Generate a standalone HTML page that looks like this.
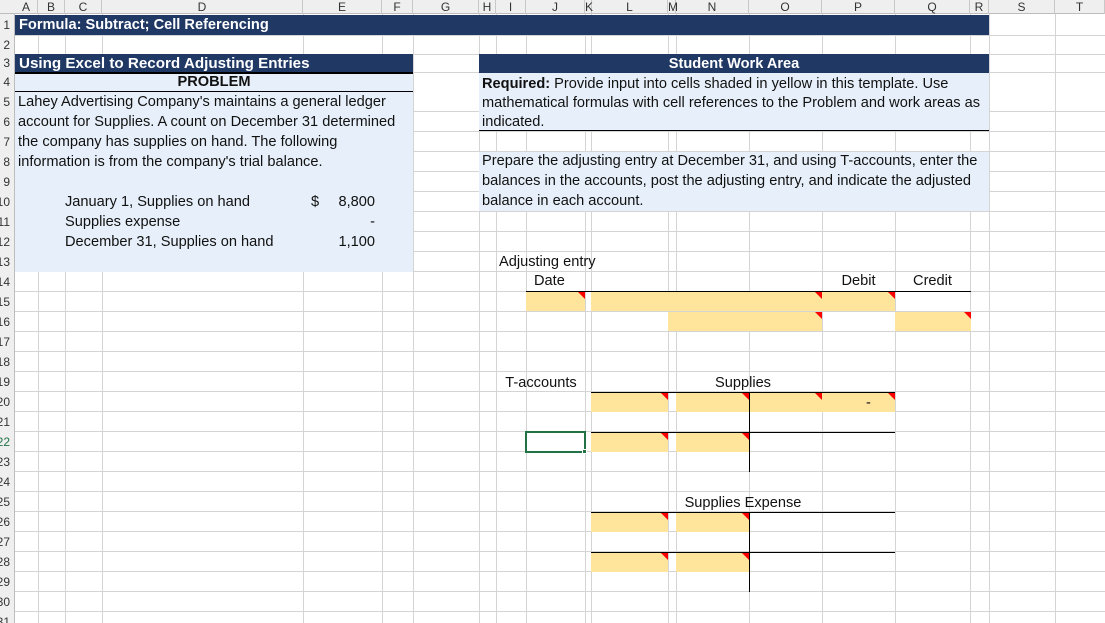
<!DOCTYPE html>
<html><head><meta charset="utf-8"><style>
*{margin:0;padding:0;box-sizing:border-box}
body{width:1105px;height:623px;overflow:hidden;background:#fff;position:relative;font-family:"Liberation Sans",Arial,sans-serif;font-size:14.6px;color:#111}
.a{position:absolute}
.rows{position:absolute;left:15px;top:92px;width:1090px;height:531px;background:repeating-linear-gradient(to bottom,transparent 0,transparent 19px,#d4d4d4 19px,#d4d4d4 20px)}
.vl{position:absolute;top:14px;width:1px;height:609px;background:#d4d4d4}
.hl{position:absolute;left:15px;width:1090px;height:1px;background:#d4d4d4}
.hdr{position:absolute;left:0;top:0;width:1105px;height:14px;background:#efefef;border-bottom:1px solid #bdbdbd}
.hdr span{position:absolute;top:0;height:14px;font-size:12px;line-height:14px;text-align:center;color:#333;border-right:1px solid #c8c8c8}
.rh{position:absolute;left:0;top:14px;width:15px;height:609px;background:#efefef;border-right:1px solid #bdbdbd;overflow:hidden}
.rh span{position:absolute;right:4px;font-size:12px;color:#333;white-space:nowrap;line-height:12px}
.navy{background:#203864;color:#fff;font-weight:bold}
.blue{background:#e7f0fa}
.y{position:absolute;background:#ffe59b}
.y::after{content:"";position:absolute;right:0;top:0;border-top:7px solid #f00;border-left:7px solid transparent}
.bk{position:absolute;background:#000}
.t{position:absolute;white-space:nowrap;line-height:20px}
</style></head><body>
<div class="rows"></div>
<div class="hl" style="top:35px"></div><div class="hl" style="top:54px"></div><div class="hl" style="top:72px"></div>
<div class="vl" style="left:38px"></div><div class="vl" style="left:65px"></div><div class="vl" style="left:102px"></div><div class="vl" style="left:303px"></div><div class="vl" style="left:382px"></div><div class="vl" style="left:413px"></div><div class="vl" style="left:479px"></div><div class="vl" style="left:496px"></div><div class="vl" style="left:526px"></div><div class="vl" style="left:585px"></div><div class="vl" style="left:591px"></div><div class="vl" style="left:668px"></div><div class="vl" style="left:676px"></div><div class="vl" style="left:749px"></div><div class="vl" style="left:822px"></div><div class="vl" style="left:895px"></div><div class="vl" style="left:970px"></div><div class="vl" style="left:989px"></div><div class="vl" style="left:1055px"></div>

<div class="hdr">
<span style="left:15px;width:23px">A</span><span style="left:38px;width:27px">B</span><span style="left:65px;width:37px">C</span><span style="left:102px;width:201px">D</span><span style="left:303px;width:79px">E</span><span style="left:382px;width:31px">F</span><span style="left:413px;width:66px">G</span><span style="left:479px;width:17px">H</span><span style="left:496px;width:30px">I</span><span style="left:526px;width:59px">J</span><span style="left:585px;width:7px">K</span><span style="left:592px;width:76px">L</span><span style="left:668px;width:8px">M</span><span style="left:676px;width:73px">N</span><span style="left:749px;width:73px">O</span><span style="left:822px;width:73px">P</span><span style="left:895px;width:75px">Q</span><span style="left:970px;width:19px">R</span><span style="left:989px;width:66px">S</span><span style="left:1055px;width:50px">T</span>
</div>
<div class="rh">
<span style="top:5px">1</span><span style="top:25px">2</span><span style="top:43px">3</span><span style="top:62px">4</span><span style="top:82px">5</span><span style="top:102px">6</span><span style="top:122px">7</span><span style="top:142px">8</span><span style="top:162px">9</span><span style="top:182px">10</span><span style="top:202px">11</span><span style="top:222px">12</span><span style="top:242px">13</span><span style="top:262px">14</span><span style="top:282px">15</span><span style="top:302px">16</span><span style="top:322px">17</span><span style="top:342px">18</span><span style="top:362px">19</span><span style="top:382px">20</span><span style="top:402px">21</span><span style="top:422px;color:#217346">22</span><span style="top:442px">23</span><span style="top:462px">24</span><span style="top:482px">25</span><span style="top:502px">26</span><span style="top:522px">27</span><span style="top:542px">28</span><span style="top:562px">29</span><span style="top:582px">30</span><span style="top:602px">31</span>
</div>

<div class="a navy" style="left:15px;top:15px;width:974px;height:20px;padding-left:4px;line-height:20px">Formula: Subtract; Cell Referencing</div>
<div class="a navy" style="left:15px;top:54px;width:398px;height:19px;padding-left:4px;line-height:20px;font-size:15.2px">Using Excel to Record Adjusting Entries</div>
<div class="a navy" style="left:479px;top:54px;width:510px;height:19px;text-align:center;line-height:20px">Student Work Area</div>

<div class="a blue" style="left:15px;top:73px;width:398px;height:199px"></div>
<div class="bk" style="left:15px;top:72px;width:398px;height:2px"></div>
<div class="bk" style="left:15px;top:91px;width:398px;height:1px"></div>
<div class="t" style="left:15px;top:72px;width:398px;text-align:center;font-weight:bold">PROBLEM</div>
<div class="t" style="left:18px;top:92px">Lahey Advertising Company's maintains a general ledger</div>
<div class="t" style="left:18px;top:112px">account for Supplies. A count on December 31 determined</div>
<div class="t" style="left:18px;top:132px">the company has supplies on hand. The following</div>
<div class="t" style="left:18px;top:152px">information is from the company's trial balance.</div>
<div class="t" style="left:65px;top:192px">January 1, Supplies on hand</div>
<div class="t" style="left:65px;top:212px">Supplies expense</div>
<div class="t" style="left:65px;top:232px">December 31, Supplies on hand</div>
<div class="t" style="left:311px;top:192px">$</div>
<div class="t" style="left:303px;top:192px;width:72px;text-align:right">8,800</div>
<div class="t" style="left:303px;top:212px;width:72px;text-align:right">-</div>
<div class="t" style="left:303px;top:232px;width:72px;text-align:right">1,100</div>

<div class="a blue" style="left:479px;top:73px;width:510px;height:58px"></div>
<div class="bk" style="left:479px;top:130px;width:510px;height:1px"></div>
<div class="t" style="left:482px;top:74px"><b>Required:</b> Provide input into cells shaded in yellow in this template. Use</div>
<div class="t" style="left:482px;top:93px">mathematical formulas with cell references to the Problem and work areas as</div>
<div class="t" style="left:482px;top:112px">indicated.</div>
<div class="a blue" style="left:479px;top:152px;width:510px;height:59px"></div>
<div class="t" style="left:482px;top:151px">Prepare the adjusting entry at December 31, and using T-accounts, enter the</div>
<div class="t" style="left:482px;top:171px">balances in the accounts, post the adjusting entry, and indicate the adjusted</div>
<div class="t" style="left:482px;top:191px">balance in each account.</div>

<div class="t" style="left:499px;top:252px">Adjusting entry</div>
<div class="t" style="left:534px;top:271px">Date</div>
<div class="t" style="left:822px;top:271px;width:73px;text-align:center">Debit</div>
<div class="t" style="left:895px;top:271px;width:75px;text-align:center">Credit</div>
<div class="bk" style="left:526px;top:291px;width:445px;height:1px"></div>
<div class="y" style="left:526px;top:292px;width:59px;height:19px"></div>
<div class="y" style="left:591px;top:292px;width:231px;height:19px"></div>
<div class="y" style="left:822px;top:292px;width:73px;height:19px"></div>
<div class="y" style="left:668px;top:312px;width:154px;height:19px"></div>
<div class="y" style="left:895px;top:312px;width:76px;height:19px"></div>

<div class="t" style="left:497px;top:373px;width:88px;text-align:center">T-accounts</div>
<div class="t" style="left:591px;top:373px;width:304px;text-align:center">Supplies</div>
<div class="bk" style="left:591px;top:392px;width:304px;height:1px"></div>
<div class="y" style="left:591px;top:393px;width:77px;height:19px"></div>
<div class="y" style="left:676px;top:393px;width:73px;height:19px"></div>
<div class="y" style="left:749px;top:393px;width:73px;height:19px"></div>
<div class="y" style="left:822px;top:393px;width:73px;height:19px"><span class="t" style="left:44px;top:0">-</span></div>
<div class="bk" style="left:749px;top:392px;width:1px;height:80px"></div>
<div class="bk" style="left:591px;top:432px;width:304px;height:1px"></div>
<div class="y" style="left:591px;top:433px;width:77px;height:19px"></div>
<div class="y" style="left:676px;top:433px;width:73px;height:19px"></div>
<div class="a" style="left:525px;top:431px;width:61px;height:22px;border:2px solid #217346"></div>
<div class="a" style="left:582px;top:449px;width:5px;height:5px;background:#217346;border:1px solid #fff"></div>

<div class="t" style="left:591px;top:493px;width:304px;text-align:center">Supplies Expense</div>
<div class="bk" style="left:591px;top:512px;width:304px;height:1px"></div>
<div class="y" style="left:591px;top:513px;width:77px;height:19px"></div>
<div class="y" style="left:676px;top:513px;width:73px;height:19px"></div>
<div class="bk" style="left:749px;top:512px;width:1px;height:80px"></div>
<div class="bk" style="left:591px;top:552px;width:304px;height:1px"></div>
<div class="y" style="left:591px;top:553px;width:77px;height:19px"></div>
<div class="y" style="left:676px;top:553px;width:73px;height:19px"></div>
</body></html>
